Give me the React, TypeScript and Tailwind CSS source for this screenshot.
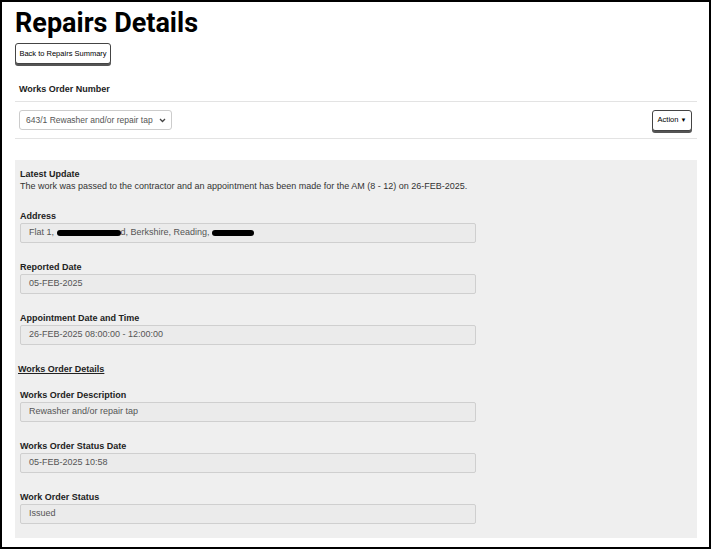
import React from "react";

const Field = ({ label, children }: { label: string; children: React.ReactNode }) => (
  <div className="mb-[19px]">
    <div className="text-[9px] font-bold leading-[11px] text-[#222] mb-[1px]">{label}</div>
    <div className="w-[456px] h-[20px] bg-[#ebebeb] border border-[#cfcfcf] rounded-[2px] px-[8px] flex items-center text-[9px] text-[#555] whitespace-nowrap">
      {children}
    </div>
  </div>
);

const Blob = ({ w }: { w: number }) => (
  <span className="inline-block bg-black rounded-full h-[6px] align-middle" style={{ width: w }} />
);

export default function App() {
  return (
    <div className="w-[711px] h-[549px] border-[2px] border-black bg-white overflow-hidden" style={{ fontFamily: "'Liberation Sans', Arial, sans-serif" }}>
      <div className="pl-[13px] pr-[12px]">
        <h1 className="text-[27px] font-bold leading-[30px] mt-[6px] text-black" style={{ fontFamily: "Roboto, 'Liberation Sans', sans-serif" }}>Repairs Details</h1>
        <button className="mt-[5px] h-[21px] w-[96px] border border-[#444] rounded-[3px] bg-white text-[7.5px] shadow-[0_2px_0_#555] text-black">Back to Repairs Summary</button>
        <div className="mt-[20px] pl-[4px] text-[9px] font-bold leading-[11px] text-[#222]">Works Order Number</div>
        <div className="mt-[6px] border-t border-b border-[#e3e3e3] h-[38px] flex items-center justify-between pl-[4px] pr-[5px]">
          <div className="w-[153px] h-[20px] border border-[#ccc] rounded-[3px] flex items-center justify-between pl-[6px] pr-[5px] text-[8.5px] text-[#555] whitespace-nowrap">
            <span>643/1 Rewasher and/or repair tap</span>
            <svg width="7" height="5" viewBox="0 0 7 5"><path d="M1 1l2.5 2.5L6 1" stroke="#444" strokeWidth="1.3" fill="none"/></svg>
          </div>
          <button className="w-[40px] h-[21px] border border-[#444] rounded-[3px] bg-white text-[7.5px] shadow-[0_2px_0_#555] flex items-center justify-center gap-[2px] text-black">
            Action<span className="text-[6px]">▼</span>
          </button>
        </div>
        <div className="mt-[21px] bg-[#efefef] h-[378px] pt-[9px] pl-[5px]">
          <div className="text-[9px] font-bold leading-[11px] text-[#222]">Latest Update</div>
          <div className="text-[9px] leading-[11px] text-[#333] mb-[19px] mt-[1px]">The work was passed to the contractor and an appointment has been made for the AM (8 - 12) on 26-FEB-2025.</div>
          <Field label="Address">
            <span>Flat 1,&nbsp;</span><Blob w={64} /><span>d, Berkshire, Reading,&nbsp;</span><Blob w={42} />
          </Field>
          <Field label="Reported Date">05-FEB-2025</Field>
          <Field label="Appointment Date and Time">26-FEB-2025 08:00:00 - 12:00:00</Field>
          <div className="mt-[19px] mb-[15px] -ml-[2px] text-[9px] font-bold underline leading-[11px] text-[#222]">Works Order Details</div>
          <Field label="Works Order Description">Rewasher and/or repair tap</Field>
          <Field label="Works Order Status Date">05-FEB-2025 10:58</Field>
          <Field label="Work Order Status">Issued</Field>
        </div>
      </div>
    </div>
  );
}
